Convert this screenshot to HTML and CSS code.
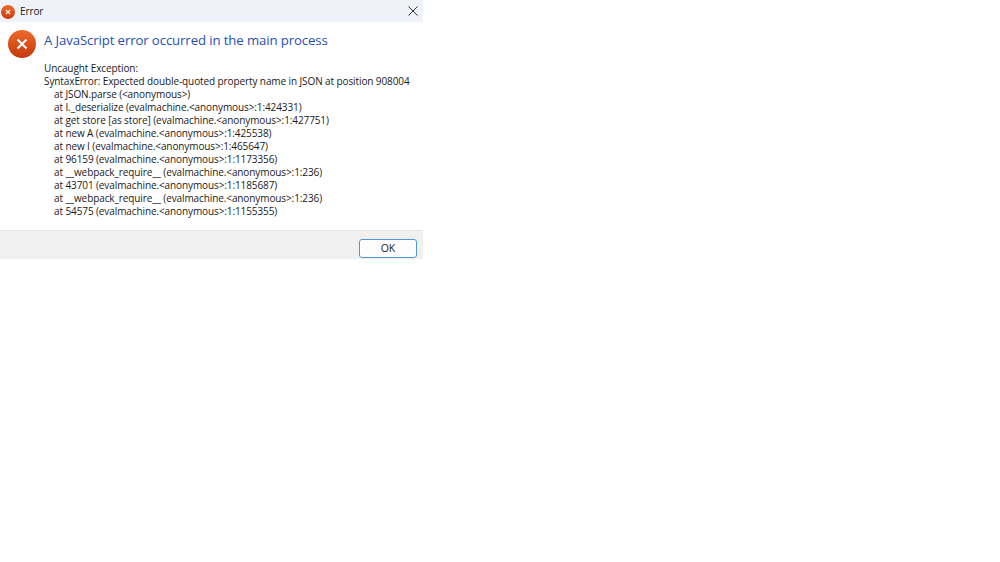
FILE: index.html
```html
<!DOCTYPE html>
<html lang="en">
<head>
<meta charset="utf-8">
<title>Error</title>
<link rel="stylesheet" href="styles.css">
</head>
<body>
<div class="dialog">
  <header class="titlebar">
    <svg class="title-icon" viewBox="0 0 16 16" aria-hidden="true">
      <defs><linearGradient id="tg" x1="0" y1="0" x2="0" y2="1"><stop offset="0" stop-color="#ee6a2c"/><stop offset="1" stop-color="#c93a0c"/></linearGradient></defs>
      <circle cx="8" cy="8" r="8" fill="url(#tg)"/>
      <path d="M5.500 5.500l5 5M10.500 5.500l-5 5" stroke="#fff" stroke-width="1.400" fill="none"/>
    </svg>
    <span class="title-text">Error</span>
    <svg class="close-icon" viewBox="0 0 10 10" aria-hidden="true">
      <path d="M.5.500l9 9M9.500.500l-9 9" stroke="#333" stroke-width="1" fill="none"/>
    </svg>
  </header>
  <main class="content">
    <svg class="main-icon" viewBox="0 0 28 28" aria-hidden="true">
      <defs><linearGradient id="mg" x1="0" y1="0" x2="0" y2="1"><stop offset="0" stop-color="#ee6a2c"/><stop offset="1" stop-color="#c5380b"/></linearGradient></defs>
      <circle cx="14" cy="14" r="14" fill="url(#mg)"/>
      <path d="M9.500 9.500l9 9M18.500 9.500l-9 9" stroke="#fff" stroke-width="2" fill="none"/>
    </svg>
    <div class="message">
      <h1 class="heading">A JavaScript error occurred in the main process</h1>
      <pre class="details">Uncaught Exception:
SyntaxError: Expected double-quoted property name in JSON at position 908004
    at JSON.parse (&lt;anonymous&gt;)
    at I._deserialize (evalmachine.&lt;anonymous&gt;:1:424331)
    at get store [as store] (evalmachine.&lt;anonymous&gt;:1:427751)
    at new A (evalmachine.&lt;anonymous&gt;:1:425538)
    at new I (evalmachine.&lt;anonymous&gt;:1:465647)
    at 96159 (evalmachine.&lt;anonymous&gt;:1:1173356)
    at __webpack_require__ (evalmachine.&lt;anonymous&gt;:1:236)
    at 43701 (evalmachine.&lt;anonymous&gt;:1:1185687)
    at __webpack_require__ (evalmachine.&lt;anonymous&gt;:1:236)
    at 54575 (evalmachine.&lt;anonymous&gt;:1:1155355)</pre>
    </div>
  </main>
  <footer class="footer">
    <button class="ok" type="button">OK</button>
  </footer>
</div>
</body>
</html>
```
FILE: styles.css
```css
html, body {
  margin: 0;
  padding: 0;
  background: #fff;
}
body {
  height: 562px;
  overflow: hidden;
  font-family: "Open Sans", "Noto Sans", sans-serif;
  color: #1a1a1a;
}
.dialog {
  width: 423px;
  height: 259px;
  display: flex;
  flex-direction: column;
}
.titlebar {
  height: 22px;
  flex: none;
  display: flex;
  align-items: center;
  background: #eff2f8;
  padding: 0 5px 0 1px;
}
.title-icon {
  width: 14px;
  height: 14px;
  margin-top: 1px;
}
.title-text {
  margin-left: 5px;
  font-size: 10px;
  letter-spacing: -0.1px;
  color: #222;
}
.close-icon {
  width: 10px;
  height: 10px;
  margin-left: auto;
}
.content {
  flex: 1;
  display: flex;
  padding: 7px 8px 0 8px;
  gap: 8px;
}
.main-icon {
  width: 28px;
  height: 28px;
  flex: none;
  margin-top: 1px;
}
.message {
  min-width: 0;
}
.heading {
  margin: 2px 0 0;
  font-size: 13.200px;
  font-weight: 400;
  letter-spacing: -0.110px;
  line-height: 18px;
  color: #1f4fb5;
  white-space: nowrap;
}
.details {
  margin: 13px 0 0;
  font-family: inherit;
  font-size: 10px;
  letter-spacing: -0.100px;
  line-height: 13px;
  color: #1a1a1a;
  white-space: pre;
}
.footer {
  height: 29px;
  flex: none;
  display: flex;
  align-items: flex-start;
  justify-content: flex-end;
  background: #f0f0f0;
  border-top: 1px solid #e8e8e8;
  box-sizing: border-box;
  padding: 8px 6px 0 0;
}
.ok {
  width: 58px;
  height: 19px;
  padding: 0 0 2px;
  font-family: inherit;
  font-size: 10.500px;
  color: #222;
  background: #fdfdfd;
  border: 1px solid #4f97d4;
  border-radius: 3px;
}
```
